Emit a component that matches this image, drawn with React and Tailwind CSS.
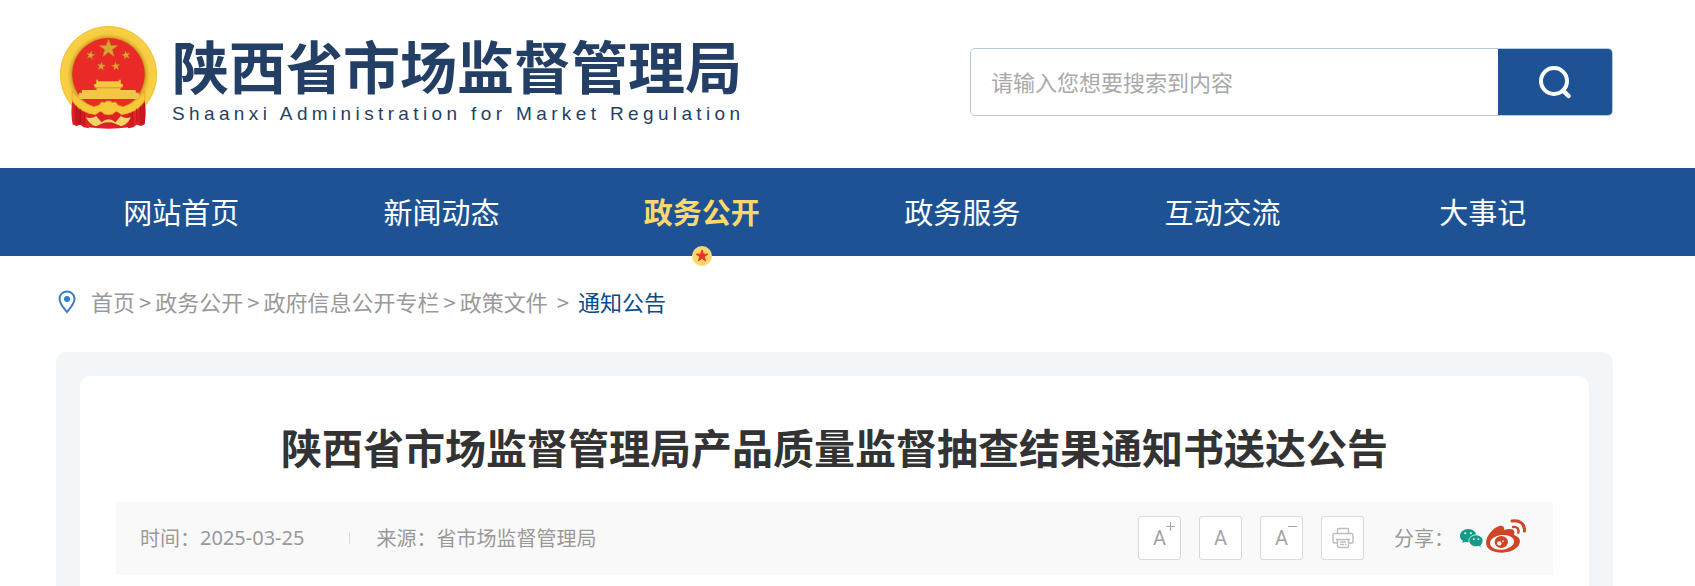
import React from "react";

const NAV_ITEMS = [
  "网站首页",
  "新闻动态",
  "政务公开",
  "政务服务",
  "互动交流",
  "大事记",
];

const CRUMBS = ["首页", "政务公开", "政府信息公开专栏", "政策文件"];

const STAR =
  "M0 -10 L2.4 -3.1 L9.5 -3.1 L3.8 1.2 L5.9 8.1 L0 3.9 L-5.9 8.1 L-3.8 1.2 L-9.5 -3.1 L-2.4 -3.1 Z";

function Emblem() {
  return (
    <svg
      viewBox="30 33 292 310"
      className="h-[103px] w-[97px] shrink-0"
      aria-hidden="true"
    >
      <defs>
        <radialGradient id="ring" cx="0.5" cy="0.5" r="0.5">
          <stop offset="0.74" stopColor="#b98a1c" />
          <stop offset="0.78" stopColor="#e3b02e" />
          <stop offset="0.84" stopColor="#f6cc40" />
          <stop offset="0.96" stopColor="#f9d046" />
          <stop offset="1" stopColor="#ecbc36" />
        </radialGradient>
        <linearGradient id="drape" x1="0" y1="0" x2="1" y2="0">
          <stop offset="0" stopColor="#e3262a" />
          <stop offset="0.3" stopColor="#c0131b" />
          <stop offset="0.6" stopColor="#e8242a" />
          <stop offset="1" stopColor="#bd141c" />
        </linearGradient>
      </defs>
      <circle cx="176" cy="179" r="146" fill="url(#ring)" />
      <circle cx="176" cy="178" r="109" fill="#e92a26" />
      <g fill="#d9a632" stroke="#c08428" strokeWidth="0.6">
        <path d={STAR} transform="translate(176 101) scale(2.9)" />
        <path d={STAR} transform="translate(122 121) rotate(12) scale(1.35)" />
        <path d={STAR} transform="translate(229 121) rotate(-12) scale(1.35)" />
        <path d={STAR} transform="translate(154 154) rotate(8) scale(1.35)" />
        <path d={STAR} transform="translate(198 154) rotate(-8) scale(1.35)" />
      </g>
      <path
        d="M139 195 h6 v4 h62 v-4 h6 v12 l7 2 v5 l-8 6 v6 h46 v8 h8 l6 19 H82 l6 -19 h8 v-8 h44 v-6 l-8 -6 v-5 l7 -2 Z"
        fill="#f6c544"
      />
      <path d="M134 219 H218" stroke="#d9932c" strokeWidth="3" />
      <path
        d="M69 251 C62 280 64 305 68 329 L78 334 L92 330 L101 338 L117 341 L116 300 L142 275 L112 275 Z"
        fill="url(#drape)"
      />
      <path
        d="M283 251 C290 280 288 305 285 329 L274 334 L261 330 L251 338 L235 341 L236 300 L210 275 L240 275 Z"
        fill="url(#drape)"
      />
      <path d="M112 302 L176 270 L240 302 L238 338 Q176 347 116 338 Z" fill="#df2026" />
      <path
        d="M67 228 C82 251 103 266 132 276 L148 271 Q154 258 163 264 Q176 253 189 264 Q198 258 204 271 L220 276 C249 266 270 251 285 228 L286 256 C270 284 248 295 215 300 Q201 289 197 291 Q188 302 176 300 Q164 302 155 291 Q151 289 137 300 C104 295 82 284 66 256 Z"
        fill="#f8c83b"
        stroke="#dd9c27"
        strokeWidth="2"
      />
      <path
        d="M108 308 Q126 313 139 304 L155 323 Q166 314 176 314 Q187 314 197 323 L213 304 Q226 313 243 308 Q234 330 214 335 L197 327 Q176 318 155 327 L138 335 Q119 331 108 308 Z"
        fill="#f4d56a"
      />
      <path
        d="M80 274 L78 328 M92 282 L91 325 M104 291 L103 332 M272 274 L275 328 M260 282 L262 325 M248 291 L250 332"
        stroke="#a9101a"
        strokeWidth="2"
      />
    </svg>
  );
}

function SearchIcon() {
  return (
    <svg viewBox="0 0 34 34" className="size-[34px]" fill="none" aria-hidden="true">
      <circle cx="16" cy="16" r="13" stroke="white" strokeWidth="4" />
      <path d="M25 25.5 L30.5 31" stroke="white" strokeWidth="4.5" strokeLinecap="round" />
    </svg>
  );
}

function PinIcon() {
  return (
    <svg viewBox="0 0 18 24" className="h-6 w-[18px] shrink-0" fill="none" aria-hidden="true">
      <path
        d="M9 1.5 C4.8 1.5 1.5 4.8 1.5 8.9 C1.5 13.6 6 18 9 22 C12 18 16.5 13.6 16.5 8.9 C16.5 4.8 13.2 1.5 9 1.5 Z"
        stroke="#3d7dc0"
        strokeWidth="2"
      />
      <circle cx="9" cy="9" r="3" fill="#2c7fd0" />
    </svg>
  );
}

function PrinterIcon() {
  return (
    <svg
      viewBox="0 0 22 22"
      className="size-[22px]"
      fill="none"
      stroke="#bdbdbd"
      strokeWidth="1.4"
      aria-hidden="true"
    >
      <path d="M5.5 6.5 V2.5 Q5.5 1.5 6.5 1.5 H15.5 Q16.5 1.5 16.5 2.5 V6.5" />
      <path d="M5 16 H2.5 Q1 16 1 14.5 V8 Q1 6.5 2.5 6.5 H19.5 Q21 6.5 21 8 V14.5 Q21 16 19.5 16 H17" />
      <path d="M4 12.5 H18 M5.5 12.5 V19 Q5.5 20.5 7 20.5 H15 Q16.5 20.5 16.5 19 V12.5" />
      <path d="M8 15 H14 M8 17.5 H12 M13 17.5 H14.5" />
    </svg>
  );
}

function WechatIcon() {
  return (
    <svg viewBox="60 63 70 58" className="h-[19px] w-[23px]" fill="#139b87" aria-hidden="true">
      <path d="M85 63 C71 63 60 72 60 84 C60 91 64 96 69 99 L67 106 L76 102 Q81 104 88 103 C100 103 110 94 110 84 C110 72 99 63 85 63 Z" />
      <path
        d="M109 81 C97 81 87 89 87 99 C87 109 97 117 109 117 Q113 117 117 116 L125 120 L123 113 C128 109 130 104 130 99 C130 89 121 81 109 81 Z"
        stroke="#f9f9f9"
        strokeWidth="2.5"
      />
      <g fill="#f9f9f9">
        <circle cx="76" cy="76" r="3.2" />
        <circle cx="93" cy="76" r="3.2" />
        <circle cx="102" cy="94" r="2.8" />
        <circle cx="116" cy="94" r="2.8" />
      </g>
    </svg>
  );
}

function WeiboIcon() {
  return (
    <svg viewBox="138 32 120 102" className="h-[34px] w-10" fill="none" aria-hidden="true">
      <path
        d="M138 103 C139 85 153 67 169 57 C181 49 194 50 193 65 C204 61 222 60 223 70 C224 76 221 79 223 81 C232 84 240 90 240 99 C239 118 216 133 186 133 C160 133 138 122 138 103 Z"
        fill="#cf4527"
      />
      <ellipse cx="186" cy="102" rx="36" ry="22" fill="#f9f9f9" transform="rotate(-6 186 102)" />
      <ellipse cx="184" cy="101" rx="20" ry="18" fill="#cf4527" />
      <circle cx="178" cy="105" r="6.5" fill="#f9f9f9" />
      <circle cx="189" cy="99" r="3" fill="#f0c4b8" />
      <g stroke="#cf4527" strokeLinecap="round">
        <path d="M216 38 C238 34 256 47 253 68" strokeWidth="9" />
        <path d="M219 56 C230 54 238 61 235 73" strokeWidth="7" />
      </g>
    </svg>
  );
}

function ToolButton({ label, sign, children }) {
  return (
    <button
      type="button"
      aria-label={label}
      className="relative flex h-11 w-[43px] items-center justify-center rounded-[3px] border border-[#d9d9d9] bg-white font-['Roboto',sans-serif] text-xl text-[#a3a3a3]"
    >
      {children}
      {sign && (
        <svg
          viewBox="0 0 9 9"
          className="absolute top-[5px] right-[5px] size-[9px]"
          stroke="#a8a8a8"
          aria-hidden="true"
        >
          <path d={sign === "plus" ? "M0 4.5 H9 M4.5 0 V9" : "M0 4.5 H9"} />
        </svg>
      )}
    </button>
  );
}

function Header() {
  return (
    <header className="flex items-start justify-between pr-[82px] pl-[60px]">
      <a href="#" className="flex pt-[26px] pb-[39px] text-[#243f66]">
        <Emblem />
        <div className="ml-[15px] pt-2">
          <div className="text-[57px] leading-[60px] font-bold">
            陕西省市场监督管理局
          </div>
          <div className="pt-2 font-['Liberation_Sans',sans-serif] text-[19px] leading-6 tracking-[0.23em]">
            Shaanxi Administration for Market Regulation
          </div>
        </div>
      </a>
      <form className="mt-12 flex h-[68px] w-[643px] overflow-hidden rounded-[5px] border border-[#b5cbdd]">
        <input
          type="text"
          aria-label="搜索"
          placeholder="请输入您想要搜索到内容"
          className="min-w-0 flex-1 px-5 pb-[2px] text-[22px] outline-none placeholder:text-[#a9a9a9]"
        />
        <button
          type="button"
          aria-label="搜索"
          className="flex w-[114px] items-center justify-center bg-[#1d5394]"
        >
          <SearchIcon />
        </button>
      </form>
    </header>
  );
}

function Nav() {
  return (
    <nav className="bg-[#1d5394] pr-[82px] pl-[51px]">
      <ul className="grid grid-cols-6">
        {NAV_ITEMS.map((item) => {
          const active = item === "政务公开";
          return (
            <li key={item} className="relative pb-[2px] text-center text-[29px] leading-[86px]">
              <a href="#" className={active ? "font-bold text-[#ffd76b]" : "text-white"}>
                {item}
              </a>
              {active && (
                <svg
                  viewBox="-10 -10 20 20"
                  className="absolute -bottom-[10px] left-1/2 size-5 -translate-x-1/2"
                  aria-hidden="true"
                >
                  <circle r="10" fill="#ffd76b" />
                  <path
                    d={STAR}
                    transform="scale(0.6)"
                    fill="#f0302b"
                    stroke="#f0302b"
                    strokeWidth="1.6"
                    strokeLinejoin="round"
                  />
                </svg>
              )}
            </li>
          );
        })}
      </ul>
    </nav>
  );
}

function Breadcrumb() {
  return (
    <div className="flex h-24 items-center pb-1 pl-[58px] text-[22px] text-[#999999]">
      <PinIcon />
      <div className="ml-[15px] flex gap-1 pb-[2px]">
        {CRUMBS.map((crumb, i) => (
          <React.Fragment key={crumb}>
            {i > 0 && <span>&gt;</span>}
            <a href="#">{crumb}</a>
          </React.Fragment>
        ))}
        <span className="mx-[5px]">&gt;</span>
        <a href="#" className="text-[#044b8c]">
          通知公告
        </a>
      </div>
    </div>
  );
}

function Article() {
  return (
    <main className="mr-[82px] ml-14 rounded-t-[10px] bg-[#f2f6f9] px-6 pt-6">
      <article className="rounded-t-[10px] bg-white px-9 pb-[11px]">
        <h1 className="pt-10 pb-[26px] text-center text-[41px] leading-[60px] font-bold text-[#333333]">
          陕西省市场监督管理局产品质量监督抽查结果通知书送达公告
        </h1>
        <div className="flex h-[73px] items-center justify-between bg-[#f9f9f9] pr-[27px] pb-px pl-6 text-xl text-[#999999]">
          <div className="flex items-center">
            <span>时间：</span>
            <time className="font-['Noto_Sans',sans-serif]">2025-03-25</time>
            <span className="mr-[26px] ml-[45px] h-3 w-px bg-[#dddddd]" />
            <span>来源：省市场监督管理局</span>
          </div>
          <div className="flex items-center">
            <div className="flex gap-[18px]">
              <ToolButton label="放大字体" sign="plus">
                A
              </ToolButton>
              <ToolButton label="默认字体">A</ToolButton>
              <ToolButton label="缩小字体" sign="minus">
                A
              </ToolButton>
              <ToolButton label="打印">
                <PrinterIcon />
              </ToolButton>
            </div>
            <span className="ml-[30px]">分享：</span>
            <a href="#" aria-label="微信" className="ml-[6px]">
              <WechatIcon />
            </a>
            <a href="#" aria-label="微博" className="ml-[3px] pb-1">
              <WeiboIcon />
            </a>
          </div>
        </div>
      </article>
    </main>
  );
}

export default function App() {
  return (
    <div className="bg-white font-['Noto_Sans_CJK_SC',sans-serif]">
      <Header />
      <Nav />
      <Breadcrumb />
      <Article />
    </div>
  );
}
